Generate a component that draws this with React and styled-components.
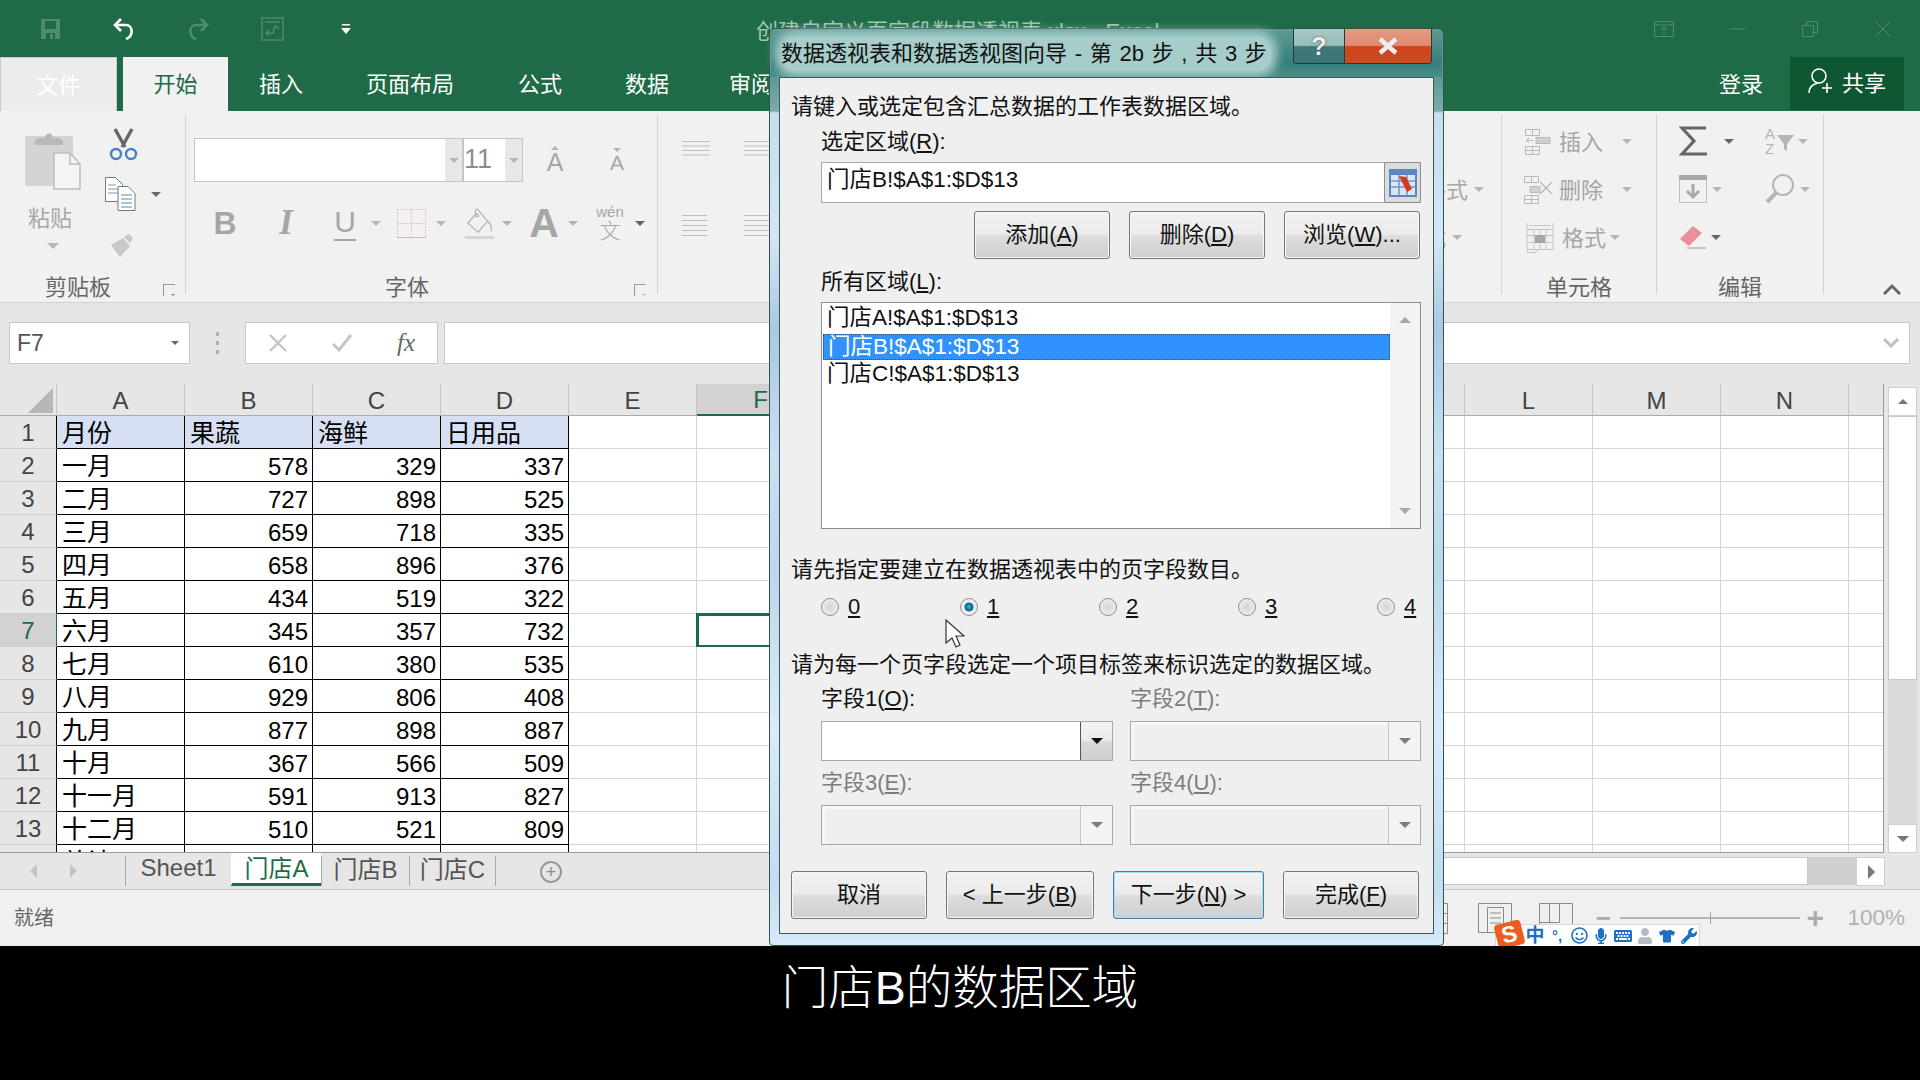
import React from 'react';
import styled, { createGlobalStyle } from 'styled-components';
import { FaRegSmile, FaMicrophone, FaKeyboard, FaUser, FaTshirt, FaWrench } from 'react-icons/fa';

const GREEN = '#1f6b48';
const DIM = '#4f8b6d';
const GREY_TEXT = '#a6a6a6';
const FONT = '"Liberation Sans", "Noto Sans CJK SC", sans-serif';

const GlobalStyle = createGlobalStyle`
  html, body { margin: 0; padding: 0; background: #000; }
  * { box-sizing: border-box; }
  #root { width: 1920px; height: 1080px; overflow: hidden; font-family: ${FONT}; }
`;

const Screen = styled.div`
  width: 1920px;
  height: 1080px;
  display: flex;
  flex-direction: column;
  background: #000;
`;

const Excel = styled.div`
  position: relative;
  height: 946px;
  display: flex;
  flex-direction: column;
  overflow: hidden;
  background: #e6e6e6;
`;

const Subtitle = styled.div`
  height: 134px;
  display: flex;
  justify-content: center;
  color: #fff;
  font-size: 46.5px;
  line-height: 84px;
  font-weight: 300;
`;

/* title bar */
const TitleBar = styled.div`
  height: 57px;
  display: flex;
  align-items: center;
  padding-left: 13px;
  background: ${GREEN};
`;

const QatButton = styled.div`
  width: 74px;
  display: flex;
  justify-content: center;
  align-items: center;
`;

const DocTitle = styled.div`
  margin-left: 373px;
  font-size: 22px;
  color: #9fc4b1;
  white-space: nowrap;
`;

const WindowButtons = styled.div`
  margin-left: auto;
  margin-right: 1px;
  display: flex;
`;

const WindowButton = styled.div`
  width: 73px;
  height: 30px;
  display: flex;
  align-items: center;
  justify-content: center;
`;

/* tabs */
const TabRow = styled.div`
  height: 54px;
  display: flex;
  background: ${GREEN};
  font-size: 22px;
`;

const FileTab = styled.div`
  width: 117px;
  margin-right: 6px;
  padding-bottom: 4px;
  display: flex;
  align-items: center;
  justify-content: center;
  background: #ececec;
  border: 1px solid #c9c9c9;
  border-bottom: 0;
  color: #fff;
`;

const RibbonTab = styled.div`
  width: ${p => p.$w}px;
  padding-bottom: 4px;
  display: flex;
  align-items: center;
  justify-content: center;
  background: ${p => (p.$active ? '#f1f1f1' : 'transparent')};
  color: ${p => (p.$active ? GREEN : '#fff')};
`;

const Account = styled.div`
  margin-left: auto;
  margin-right: 16px;
  display: flex;
  align-items: stretch;
`;

const SignIn = styled.div`
  width: 98px;
  padding-bottom: 4px;
  display: flex;
  align-items: center;
  justify-content: center;
  color: #fff;
`;

const ShareButton = styled.div`
  width: 114px;
  height: 53px;
  display: flex;
  align-items: center;
  gap: 9px;
  padding: 0 0 5px 18px;
  background: #0f5732;
  color: #fff;
`;

/* ribbon */
const Ribbon = styled.div`
  height: 192px;
  display: flex;
  background: #f1f1f1;
  border-bottom: 1px solid #d2d2d2;
`;

const Group = styled.div`
  width: ${p => p.$w}px;
  display: flex;
  flex-direction: column;
`;

const GroupBody = styled.div`
  height: 162px;
  display: flex;
  flex-direction: ${p => (p.$row ? 'row' : 'column')};
  padding: ${p => p.$pad || '0'};
`;

const GroupLabel = styled.div`
  height: 29px;
  display: grid;
  grid-template-columns: ${p => (p.$shift ? `${p.$shift}px auto 1fr` : '1fr auto 1fr')};
  align-items: center;
  font-size: 22px;
  line-height: 21px;
  color: #666;
`;

const Launcher = styled.div`
  grid-column: 3;
  justify-self: end;
  margin-right: ${p => p.$mr || 10}px;
  margin-top: 4px;
  width: 12px;
  height: 12px;
  border-left: 1px solid #999;
  border-top: 1px solid #999;
  display: flex;
  align-items: flex-end;
  justify-content: flex-end;
`;

const Divider = styled.div`
  width: 1px;
  margin: 4px 0 8px;
  background: #d4d4d4;
`;

const Caret = styled.span`
  display: inline-block;
  flex: none;
  width: 0;
  height: 0;
  margin-left: ${p => p.$ml || 0}px;
  border-left: ${p => p.$s || 6}px solid transparent;
  border-right: ${p => p.$s || 6}px solid transparent;
  border-top: ${p => (p.$up ? 0 : `${p.$s || 6}px solid ${p.$c || '#b5b5b5'}`)};
  border-bottom: ${p => (p.$up ? `${p.$s || 6}px solid ${p.$c || '#b5b5b5'}` : 0)};
`;

const PasteColumn = styled.div`
  width: 100px;
  padding-top: 19px;
  padding-left: 6px;
  display: flex;
  flex-direction: column;
  align-items: center;
  color: ${GREY_TEXT};
  font-size: 22px;
`;

const PasteText = styled.div`
  line-height: 30px;
  margin: 14px 0 9px -6px;
`;

const ClipTools = styled.div`
  width: 85px;
  padding-top: 17px;
  display: flex;
  flex-direction: column;
  align-items: flex-start;
`;

const ClipTool = styled.div`
  display: flex;
  align-items: center;
  margin-top: ${p => p.$mt || 0}px;
  margin-left: ${p => p.$ml || 0}px;
`;

const FontRow = styled.div`
  display: flex;
  align-items: center;
  height: ${p => p.$h}px;
  margin-top: ${p => p.$mt || 0}px;
  margin-left: 8px;
`;

const ComboField = styled.div`
  width: ${p => p.$w}px;
  height: 44px;
  display: flex;
  justify-content: space-between;
  margin-right: ${p => p.$mr || 0}px;
  background: #fff;
  border: 1px solid #c6c6c6;
  padding-left: 0;
  font-size: 27px;
  line-height: 40px;
  color: #8c8c8c;
  font-weight: 300;
`;

const ComboDrop = styled.div`
  width: 17px;
  display: flex;
  align-items: center;
  justify-content: center;
  background: #e8e8e8;
`;

const FontSizer = styled.div`
  width: ${p => p.$w}px;
  height: 44px;
  display: flex;
  flex-direction: column;
  align-items: center;
  justify-content: center;
  color: ${GREY_TEXT};
  font-size: ${p => p.$size}px;
  line-height: ${p => p.$size}px;
`;

const Slot = styled.div`
  width: ${p => p.$w}px;
  margin-left: ${p => p.$ml || 0}px;
  display: flex;
  align-items: center;
  justify-content: center;
  color: ${GREY_TEXT};
`;

const BoldMark = styled.span`
  font-size: 32px;
  font-weight: 700;
`;

const ItalicMark = styled.span`
  font-family: "Liberation Serif", serif;
  font-size: 35px;
  font-weight: 700;
  font-style: italic;
`;

const UnderMark = styled.span`
  font-size: 30px;
  line-height: 34px;
  border-bottom: 2px solid ${GREY_TEXT};
`;

const BigA = styled.span`
  font-size: 41px;
  line-height: 40px;
  font-weight: 700;
`;

const PhoneticMark = styled.div`
  display: flex;
  flex-direction: column;
  align-items: center;
  font-size: 15px;
  line-height: 16px;
`;

const PhoneticChar = styled.span`
  font-size: 21px;
  line-height: 22px;
  font-weight: 300;
`;

const AlignGrid = styled.div`
  display: grid;
  grid-template-columns: 62px 62px;
  grid-template-rows: 74px auto;
  padding: 30px 0 0 24px;
`;

const StyleRows = styled.div`
  padding: 6px 0 0 336px;
`;

const ToolRow = styled.div`
  height: 48px;
  display: flex;
  align-items: center;
  font-size: 22px;
  color: ${GREY_TEXT};
  padding-left: ${p => p.$pl || 0}px;
`;

const ToolText = styled.span`
  margin-top: -3px;
`;

const RowIcon = styled.div`
  width: ${p => p.$w}px;
  display: flex;
  align-items: center;
`;

const EditGrid = styled.div`
  display: grid;
  grid-template-columns: 86px 60px;
  grid-auto-rows: 48px;
  padding: 6px 0 0 22px;
`;

const EditCell = styled.div`
  display: flex;
  align-items: center;
`;

const RibbonEnd = styled.div`
  flex: 1;
  display: flex;
  align-items: flex-end;
  justify-content: flex-end;
  padding: 0 19px 7px 0;
`;

/* formula bar */
const FormulaBar = styled.div`
  height: 81px;
  display: flex;
  align-items: flex-start;
  padding: 19px 10px 0 9px;
  background: #e6e6e6;
`;

const NameBox = styled.div`
  width: 181px;
  height: 42px;
  display: flex;
  align-items: center;
  justify-content: space-between;
  padding: 0 10px 0 7px;
  background: #fff;
  border: 1px solid #c8c8c8;
  font-size: 23px;
  color: #555;
`;

const BarDots = styled.div`
  width: 55px;
  height: 42px;
  display: flex;
  flex-direction: column;
  align-items: center;
  justify-content: center;
  gap: 5px;
`;

const BarDot = styled.span`
  width: 3px;
  height: 4px;
  background: #b0b0b0;
`;

const FuncBox = styled.div`
  width: 193px;
  height: 42px;
  display: flex;
  align-items: center;
  justify-content: space-between;
  padding: 0 22px 0 23px;
  background: #fff;
  border: 1px solid #c8c8c8;
  color: #666;
`;

const FxMark = styled.span`
  font-family: "Liberation Serif", serif;
  font-style: italic;
  font-size: 25px;
`;

const FormulaInput = styled.div`
  flex: 1;
  height: 42px;
  margin-left: 6px;
  display: flex;
  align-items: center;
  justify-content: flex-end;
  padding-right: 10px;
  background: #fff;
  border: 1px solid #c8c8c8;
`;

/* sheet */
const SheetBody = styled.div`
  height: 469px;
  display: flex;
`;

const SheetGrid = styled.div`
  width: 1884px;
  height: 469px;
  overflow: hidden;
  display: grid;
  grid-template-columns: 57px repeat(15, 128px);
  grid-template-rows: 32px repeat(14, 33px);
  border-right: 1px solid #9a9a9a;
  border-bottom: 1px solid #9a9a9a;
  background: #fff;
`;

const Corner = styled.div`
  background: #e6e6e6;
  border-right: 1px solid #c4c4c4;
  border-bottom: 1px solid #ababab;
  display: flex;
  align-items: flex-end;
  justify-content: flex-end;
  padding: 0 3px 2px 0;
`;

const CornerMark = styled.span`
  width: 0;
  height: 0;
  border-left: 25px solid transparent;
  border-bottom: 25px solid #b7b7b7;
`;

const ColHead = styled.div`
  display: flex;
  align-items: center;
  justify-content: center;
  padding-top: 2px;
  font-size: 24px;
  color: ${p => (p.$sel ? GREEN : '#444')};
  background: ${p => (p.$sel ? '#d2d2d2' : '#e6e6e6')};
  border-right: 1px solid #c4c4c4;
  border-bottom: ${p => (p.$sel ? `2px solid ${GREEN}` : '1px solid #ababab')};
`;

const RowHead = styled.div`
  display: flex;
  align-items: center;
  justify-content: center;
  padding-top: 2px;
  font-size: 24px;
  color: ${p => (p.$sel ? GREEN : '#444')};
  background: ${p => (p.$sel ? '#d2d2d2' : '#e6e6e6')};
  border-right: 1px solid ${p => (p.$sel ? GREEN : '#000')};
  border-bottom: 1px solid #cfcfcf;
`;

const Cell = styled.div`
  display: flex;
  align-items: center;
  justify-content: ${p => (p.$num ? 'flex-end' : 'flex-start')};
  padding: 2px 4px 0 5px;
  font-size: ${p => (p.$num ? 24 : 25)}px;
  line-height: 31px;
  color: #000;
  background: ${p => (p.$head ? '#d6e0f2' : '#fff')};
  border-right: 1px solid ${p => (p.$boxed ? '#000' : '#d6d6d6')};
  border-bottom: 1px solid ${p => (p.$boxed ? '#000' : '#d6d6d6')};
  outline: ${p => (p.$sel ? `3px solid #1d6a47` : 'none')};
  outline-offset: -2px;
`;

const VScroll = styled.div`
  width: 36px;
  display: flex;
  flex-direction: column;
  padding: 3px 3px 0 4px;
`;

const ScrollButton = styled.div`
  width: ${p => p.$w || 29}px;
  height: ${p => p.$h || 29}px;
  flex: none;
  display: flex;
  align-items: center;
  justify-content: center;
  background: #fff;
  border: 1px solid #d0d0d0;
`;

const VTrack = styled.div`
  flex: 1;
  background: #dadada;
`;

const VThumb = styled.div`
  height: 264px;
  background: #fff;
  border: 1px solid #c8c8c8;
`;

/* sheet tabs */
const TabBar = styled.div`
  height: 36px;
  display: flex;
  background: #e6e6e6;
  padding-right: 35px;
`;

const TabNav = styled.div`
  width: 125px;
  display: flex;
  align-items: center;
  gap: 31px;
  padding-left: 30px;
`;

const SheetTab = styled.div`
  width: ${p => p.$w}px;
  height: ${p => (p.$active ? 33 : 30)}px;
  margin-top: ${p => (p.$active ? 0 : 3)}px;
  padding-bottom: ${p => (p.$active ? 4 : 7)}px;
  display: flex;
  align-items: center;
  justify-content: center;
  font-size: 24px;
  color: ${p => (p.$active ? GREEN : '#555')};
  background: ${p => (p.$active ? '#fff' : 'transparent')};
  border-left: 1px solid ${p => (p.$active ? 'transparent' : '#a8a8a8')};
  border-right: ${p => (p.$last ? '1px solid #a8a8a8' : 0)};
  border-bottom: ${p => (p.$active ? `3px solid ${GREEN}` : 0)};
`;

const AddSheet = styled.div`
  width: 22px;
  height: 22px;
  margin: 8px 0 0 44px;
  border: 2px solid #9a9a9a;
  border-radius: 50%;
  display: flex;
  align-items: center;
  justify-content: center;
  color: #8a8a8a;
  font-size: 18px;
  line-height: 18px;
`;

const HScroll = styled.div`
  margin-left: auto;
  margin-top: 4px;
  width: 1000px;
  height: 28px;
  display: flex;
`;

const HThumb = styled.div`
  flex: 1;
  background: #fff;
  border: 1px solid #c8c8c8;
`;

const HTrack = styled.div`
  width: 48px;
  background: #cfcfcf;
`;

/* status bar */
const StatusBar = styled.div`
  position: relative;
  height: 57px;
  display: flex;
  align-items: center;
  padding: 0 15px 0 14px;
  background: #f0f0f0;
  border-top: 1px solid #c9c9c9;
  font-size: 20px;
  color: #666;
`;

const StatusText = styled.span`
  margin-top: -4px;
`;

const StatusRight = styled.div`
  margin-left: auto;
  display: flex;
  align-items: center;
`;

const ViewIcon = styled.div`
  margin-left: ${p => p.$ml || 0}px;
  display: flex;
`;

const ZoomSlider = styled.div`
  width: 180px;
  height: 2px;
  margin: 0 6px;
  background: #b4b4b4;
  display: flex;
  justify-content: center;
  align-items: center;
`;

const ZoomTick = styled.span`
  width: 1px;
  height: 12px;
  background: #a0a0a0;
`;

const ZoomMark = styled.span`
  font-size: ${p => p.$size}px;
  font-weight: 700;
  line-height: 20px;
  color: #ababab;
  width: ${p => p.$w}px;
  margin-left: ${p => p.$ml || 0}px;
  text-align: center;
`;

const ZoomValue = styled.span`
  margin-left: 25px;
  font-size: 22.5px;
  color: #b2b2b2;
`;

/* sogou floating bar */
const ImeBar = styled.div`
  position: absolute;
  left: 1495px;
  top: 34px;
  width: 205px;
  height: 22px;
  display: flex;
  align-items: center;
  background: #fff;
  border: 1px solid #d6d6d6;
  border-bottom: 0;
  color: #1d70c4;
`;

const ImeLogo = styled.div`
  position: absolute;
  left: 0;
  top: -3px;
  width: 27px;
  height: 25px;
  background: #ec5d22;
  border-radius: 4px;
  transform: rotate(-14deg);
  color: #fff;
  font-size: 23px;
  font-weight: 700;
  line-height: 25px;
  text-align: center;
`;

const ImeItem = styled.div`
  width: 22px;
  display: flex;
  align-items: center;
  justify-content: center;
  font-size: ${p => p.$size || 16}px;
  font-weight: 700;
  line-height: 20px;
  color: ${p => p.$c || '#1d70c4'};
`;

const ImeItems = styled.div`
  display: flex;
  margin-left: 28px;
`;

/* wizard dialog */
const Dialog = styled.div`
  position: absolute;
  left: 769px;
  top: 28px;
  width: 675px;
  height: 918px;
  display: flex;
  flex-direction: column;
  padding: 0 9px 11px;
  border: 1px solid #35524f;
  border-radius: 6px 6px 4px 4px;
  background: linear-gradient(180deg, #5e9793 0, #5f9a96 50px, #79aca9 82px, #c6def1 84px,
    #d2e6f6 210px, #a9c8e2 300px, #c8e0f4 430px, #bcd6ec 540px, #d8ecfa 700px, #c2dcf2 850px, #d8eafa 917px);
`;

const DialogHead = styled.div`
  height: 48px;
  flex: none;
  display: flex;
  align-items: flex-start;
  margin: 0 -8px;
  padding: 0 10px 0 10px;
  background: linear-gradient(180deg, #5f9a96 0, #33807a 70%, #4b8d89 100%);
  border-radius: 6px 6px 0 0;
`;

const DialogTitle = styled.div`
  margin-top: 8px;
  height: 34px;
  padding-right: 4px;
  font-size: 22px;
  line-height: 34px;
  word-spacing: 1.6px;
  color: #111;
  white-space: nowrap;
  background: #a6cdca;
  box-shadow: 0 0 10px 6px #a6cdca;
  border-radius: 14px;
`;

const CaptionButtons = styled.div`
  margin-left: auto;
  display: flex;
  border: 1px solid #1f3b3c;
  border-top: 0;
  border-radius: 0 0 4px 4px;
  overflow: hidden;
`;

const CaptionHelp = styled.div`
  width: 51px;
  height: 34px;
  display: flex;
  align-items: center;
  justify-content: center;
  border-right: 1px solid #1f3b3c;
  background: linear-gradient(180deg, #a8c9c5 0, #9abdb9 48%, #3f7a7b 52%, #3a7475 100%);
  color: #eee;
  font-size: 25px;
  font-weight: 700;
  text-shadow: 0 0 2px #333;
`;

const CaptionClose = styled.div`
  width: 86px;
  height: 34px;
  display: flex;
  align-items: center;
  justify-content: center;
  background: linear-gradient(180deg, #e49a82 0, #e08a70 48%, #d1441c 52%, #cc4a22 100%);
`;

const DialogPanel = styled.div`
  flex: 1;
  display: flex;
  flex-direction: column;
  padding: 14px 12px 0 11px;
  background: #efefef;
  border: 1px solid #3a5a5a;
  font-size: 22px;
  line-height: 30px;
  color: #111;
`;

const Prompt = styled.div`
  height: 30px;
  margin-top: ${p => p.$mt || 0}px;
`;

const FieldLabel = styled.div`
  height: 30px;
  margin-top: ${p => p.$mt || 0}px;
  margin-left: ${p => (p.$flat ? 0 : 30)}px;
  color: ${p => (p.$off ? '#7d7d7d' : '#111')};
`;

const RangeField = styled.div`
  height: 41px;
  margin: 5px 0 0 30px;
  display: flex;
  justify-content: space-between;
  background: #fff;
  border: 1px solid #a8a8a8;
  padding-left: 5px;
  font-size: 22.5px;
  line-height: 34px;
`;

const RefButton = styled.div`
  width: 37px;
  display: flex;
  align-items: center;
  justify-content: center;
  background: #dcdcdc;
  border: 1px solid #8e8e8e;
  border-radius: 2px;
  margin: -1px -1px -1px 0;
`;

const ButtonRow = styled.div`
  display: flex;
  justify-content: ${p => (p.$end ? 'flex-end' : 'flex-start')};
  gap: 19px;
  margin-top: ${p => p.$mt}px;
  padding-right: 1px;
`;

const WizardButton = styled.div`
  width: ${p => p.$w || 136}px;
  height: 48px;
  display: flex;
  align-items: center;
  justify-content: center;
  color: #111;
  background: linear-gradient(180deg, #f2f2f2 0, #ebebeb 48%, #dddddd 52%, #cfcfcf 100%);
  border: 1px solid ${p => (p.$primary ? '#3c7fb1' : '#777')};
  box-shadow: ${p => (p.$primary ? 'inset 0 0 0 1px #a9dcf2' : 'inset 0 0 0 1px #f7f7f7')};
  border-radius: 3px;
`;

const RangeList = styled.div`
  height: 227px;
  margin: 5px 0 0 30px;
  display: flex;
  background: #fff;
  border: 1px solid #8c8c8c;
  padding: 2px 0 0 1px;
  font-size: 22.5px;
`;

const RangeItems = styled.div`
  flex: 1;
`;

const RangeItem = styled.div`
  height: ${p => (p.$sel ? 26 : 28)}px;
  margin: ${p => (p.$sel ? '1px 0' : 0)};
  padding-left: 4px;
  line-height: ${p => (p.$sel ? 24 : 26)}px;
  color: ${p => (p.$sel ? '#fff' : '#111')};
  background: ${p => (p.$sel ? '#3092ff' : 'transparent')};
  border: ${p => (p.$sel ? '1px dotted #3d4a5c' : '0')};
`;

const ListScroll = styled.div`
  width: 30px;
  margin-top: -2px;
  background: #f3f3f3;
  display: flex;
  flex-direction: column;
  align-items: center;
  justify-content: space-between;
  padding: 14px 0 14px;
`;

const RadioRow = styled.div`
  display: grid;
  grid-template-columns: repeat(5, 139px);
  margin: 7px 0 0 30px;
  height: 30px;
`;

const RadioItem = styled.div`
  display: flex;
  align-items: center;
  gap: 9px;
`;

const RadioDot = styled.span`
  width: 18px;
  height: 18px;
  border-radius: 50%;
  border: 1px solid #8c8c8c;
  background: ${p =>
    p.$on
      ? 'radial-gradient(circle, #39b3e6 0, #05597f 36%, #e6e6e6 42%, #fff 100%)'
      : 'radial-gradient(circle, #d4d4d4 0, #e4e4e4 50%, #fff 100%)'};
`;

const FieldGrid = styled.div`
  display: grid;
  grid-template-columns: 292px 291px;
  column-gap: 17px;
  margin: ${p => p.$mt}px 0 0 30px;
`;

const ComboBox = styled.div`
  height: 40px;
  margin-top: 7px;
  display: flex;
  justify-content: flex-end;
  background: ${p => (p.$off ? '#efefef' : '#fff')};
  border: 1px solid #a9a9a9;
  box-shadow: ${p => (p.$off ? 'inset 3px 3px 0 #f7f7f7' : 'none')};
`;

const ComboButton = styled.div`
  width: 32px;
  display: flex;
  align-items: center;
  justify-content: center;
  background: ${p =>
    p.$off ? '#f3f3f3' : 'linear-gradient(180deg, #f2f2f2 0, #ebebeb 48%, #d8d8d8 52%, #cfcfcf 100%)'};
  border-left: 1px solid ${p => (p.$off ? '#c8c8c8' : '#555')};
`;

const MouseCursor = styled.svg`
  position: absolute;
  left: 175px;
  top: 590px;
`;

const RANGES = ['门店A!$A$1:$D$13', '门店B!$A$1:$D$13', '门店C!$A$1:$D$13'];
const COLUMNS = 'ABCDEFGHIJKLMNO'.split('');
const TABLE = [
  ['月份', '果蔬', '海鲜', '日用品'],
  ['一月', 578, 329, 337],
  ['二月', 727, 898, 525],
  ['三月', 659, 718, 335],
  ['四月', 658, 896, 376],
  ['五月', 434, 519, 322],
  ['六月', 345, 357, 732],
  ['七月', 610, 380, 535],
  ['八月', 929, 806, 408],
  ['九月', 877, 898, 887],
  ['十月', 367, 566, 509],
  ['十一月', 591, 913, 827],
  ['十二月', 510, 521, 809],
  ['总计', '', '', '']
];

function QatBar() {
  return (
    <>
      <QatButton>
        <svg width="21" height="22" viewBox="0 0 21 22">
          <path d="M1 1h19v20H1z" fill={DIM} />
          <path d="M5 3h11v8H5zM6 15h9v6H6z" fill={GREEN} />
          <path d="M10 16h3v5h-3z" fill={DIM} />
        </svg>
      </QatButton>
      <QatButton>
        <svg width="24" height="24" viewBox="0 0 24 24" fill="none" stroke="#fff" strokeWidth="2.6">
          <path d="M9 2 3 8l6 6" />
          <path d="M3 8h11c7 0 8 11 0 14" />
        </svg>
      </QatButton>
      <QatButton>
        <svg width="24" height="24" viewBox="0 0 24 24" fill="none" stroke={DIM} strokeWidth="2.6">
          <path d="M15 2l6 6-6 6" />
          <path d="M21 8H10C3 8 2 19 10 22" />
        </svg>
      </QatButton>
      <QatButton>
        <svg width="23" height="24" viewBox="0 0 23 24" fill="none" stroke={DIM} strokeWidth="1.4">
          <path d="M1 1h21v22H1z" />
          <path d="M4 5h15M8 19l-3-3 3-3M5 16h7l2-7M12 12l3-3 3 3" />
        </svg>
      </QatButton>
      <QatButton>
        <svg width="12" height="12" viewBox="0 0 12 12" fill="#fff">
          <path d="M2 1h8v1.6H2zM1 5h10L6 11z" />
        </svg>
      </QatButton>
    </>
  );
}

function WindowIcons() {
  return (
    <WindowButtons>
      <WindowButton>
        <svg width="20" height="16" viewBox="0 0 20 16" fill="none" stroke={DIM}>
          <path d="M.5.5h19v15H.5zM.5 4h19M10 14V6M7 9l3-3 3 3" />
        </svg>
      </WindowButton>
      <WindowButton>
        <svg width="16" height="2" viewBox="0 0 16 2">
          <path d="M0 1h16" stroke={DIM} />
        </svg>
      </WindowButton>
      <WindowButton>
        <svg width="16" height="16" viewBox="0 0 16 16" fill="none" stroke={DIM}>
          <path d="M.5 4.500h11v11H.5zM4.500 4V.5h11v11H12" />
        </svg>
      </WindowButton>
      <WindowButton>
        <svg width="16" height="16" viewBox="0 0 16 16" fill="none" stroke={DIM}>
          <path d="M.5.5l15 15M15.500.5l-15 15" />
        </svg>
      </WindowButton>
    </WindowButtons>
  );
}

function ClipboardGroup() {
  return (
    <Group $w={185}>
      <GroupBody $row>
        <PasteColumn>
          <svg width="56" height="60" viewBox="0 0 56 60">
            <rect x="0" y="6" width="48" height="50" rx="3" fill="#d4d4d4" />
            <path d="M10 12c0-3 3-4 6-4h4c0-6 8-6 8 0h4c3 0 6 1 6 4v3H10z" fill="#b9b9b9" />
            <path d="M29 23h16l10 11v25H29z" fill="#f5f3f5" stroke="#bdbdbd" strokeWidth="1.5" />
            <path d="M45 23v11h10" fill="none" stroke="#bdbdbd" strokeWidth="1.5" />
          </svg>
          <PasteText>粘贴</PasteText>
          <Caret $c="#b8b8b8" />
        </PasteColumn>
        <ClipTools>
          <ClipTool $ml={9}>
            <svg width="29" height="33" viewBox="0 0 29 33" fill="none">
              <path d="M6 1l10 18M23 1L13 19" stroke="#666" strokeWidth="3.4" />
              <circle cx="7" cy="26" r="5" stroke="#4f81bd" strokeWidth="2.4" />
              <circle cx="22" cy="26" r="5" stroke="#4f81bd" strokeWidth="2.4" />
            </svg>
          </ClipTool>
          <ClipTool $mt={16} $ml={5}>
            <svg width="31" height="34" viewBox="0 0 31 34" fill="none" stroke="#777">
              <path d="M.5.5h10l7 7v17H.5z" fill="#fff" />
              <path d="M3 8h8M3 12h11M3 16h11" stroke="#6d9fb5" />
              <path d="M13 9.500h10l7 7v17H13z" fill="#fff" />
              <path d="M16 18h11M16 22h11M16 26h11M16 30h11" stroke="#4f8ca8" />
            </svg>
            <Caret $ml={15} $c="#6a6a6a" $s={5} />
          </ClipTool>
          <ClipTool $mt={22} $ml={10}>
            <svg width="26" height="24" viewBox="0 0 26 24" fill="#c8c8c8">
              <path d="M1 12 13 5l7 8-10 11zM14 4l5-3 4 4-3 5z" />
            </svg>
          </ClipTool>
        </ClipTools>
      </GroupBody>
      <GroupLabel $shift={45}>
        <span />
        <span>剪贴板</span>
        <Launcher>
          <Caret $s={2} $c="#888" />
        </Launcher>
      </GroupLabel>
    </Group>
  );
}

function FontGroup() {
  return (
    <Group $w={471}>
      <GroupBody $pad="27px 0 0">
        <FontRow $h={44}>
          <ComboField $w={269}>
            <span />
            <ComboDrop>
              <Caret $s={5} />
            </ComboDrop>
          </ComboField>
          <ComboField $w={60} $mr={10}>
            <span>11</span>
            <ComboDrop>
              <Caret $s={5} />
            </ComboDrop>
          </ComboField>
          <FontSizer $w={44} $size={25}>
            <Caret $up $s={4} />
            A
          </FontSizer>
          <FontSizer $w={80} $size={21}>
            <Caret $s={4} />
            A
          </FontSizer>
        </FontRow>
        <FontRow $h={40} $mt={21}>
          <Slot $w={62}><BoldMark>B</BoldMark></Slot>
          <Slot $w={60}><ItalicMark>I</ItalicMark></Slot>
          <Slot $w={46} $ml={6}><UnderMark>U</UnderMark></Slot>
          <Slot $w={16}><Caret $s={5} /></Slot>
          <Slot $w={29} $ml={13}>
            <svg width="29" height="29" viewBox="0 0 29 29" fill="#f5eff4" stroke="#c9bcc6" strokeDasharray="1.5 1.5">
              <path d="M.5.5h28v28H.5zM14.500.5v28M.5 14.500h28" />
              <path d="M0 28.500h29" stroke="#bdbdbd" strokeDasharray="none" />
            </svg>
          </Slot>
          <Slot $w={16} $ml={7}><Caret $s={5} /></Slot>
          <Slot $w={30} $ml={16}>
            <svg width="32" height="34" viewBox="0 0 32 34" fill="none" stroke="#b5b5b5" strokeWidth="1.4">
              <path d="M13 2c-2 0-3 4-1 5l-9 10 11 10 10-12z" />
              <circle cx="13" cy="9" r="1.5" />
              <path d="M24 15c4 3 5 6 4 11" />
              <path d="M0 31h31v3H0z" fill="#d4d4d4" stroke="none" />
            </svg>
          </Slot>
          <Slot $w={16} $ml={4}><Caret $s={5} /></Slot>
          <Slot $w={30} $ml={14}><BigA>A</BigA></Slot>
          <Slot $w={16} $ml={6}><Caret $s={5} /></Slot>
          <Slot $w={30} $ml={14}>
            <PhoneticMark>
              wén
              <PhoneticChar>文</PhoneticChar>
            </PhoneticMark>
          </Slot>
          <Slot $w={16} $ml={7}><Caret $s={5} $c="#666" /></Slot>
        </FontRow>
      </GroupBody>
      <GroupLabel $shift={199}>
        <span />
        <span>字体</span>
        <Launcher $mr={11}>
          <Caret $s={2} $c="#bbb" />
        </Launcher>
      </GroupLabel>
    </Group>
  );
}

const AlignLines = ({ w, lines = 3, gap = 5 }) => (
  <svg width={w} height={lines * gap + 1} viewBox={`0 0 ${w} ${lines * gap + 1}`}>
    {Array.from({ length: lines }).map((_, i) => (
      <path key={i} d={`M0 ${i * gap + 0.5}h${w}`} stroke="#bdbdbd" />
    ))}
  </svg>
);

function AlignGroup() {
  return (
    <Group $w={342}>
      <GroupBody>
        <AlignGrid>
          <AlignLines w={28} lines={4} gap={4.5} />
          <AlignLines w={28} lines={4} gap={4.5} />
          <AlignLines w={25} lines={5} gap={5} />
          <AlignLines w={28} lines={5} gap={5} />
        </AlignGrid>
      </GroupBody>
    </Group>
  );
}

function StylesGroup() {
  return (
    <Group $w={501}>
      <GroupBody>
        <StyleRows>
          <ToolRow><ToolText>条件格式</ToolText><Caret $ml={6} $s={5} /></ToolRow>
          <ToolRow><ToolText>套用表格格式</ToolText><Caret $ml={6} $s={5} /></ToolRow>
          <ToolRow><ToolText>单元格样式</ToolText><Caret $ml={6} $s={5} /></ToolRow>
        </StyleRows>
      </GroupBody>
    </Group>
  );
}

function CellsGroup() {
  return (
    <Group $w={154}>
      <GroupBody $pad="6px 0 0">
        <ToolRow $pl={22}>
          <RowIcon $w={35}>
            <svg width="27" height="27" viewBox="0 0 27 27" fill="none" stroke="#b9b9b9">
              <path d="M1.500 1.500h14v6h-14zM8.500 1.500v6M1.500 18.500h14v8h-14zM8.500 18.500v8M1.500 22.500h14" />
              <path d="M12 9.500h14v6H12z" fill="#cfcfcf" />
              <path d="M9 12.500H2M5 10l-3 2.500L5 15" />
            </svg>
          </RowIcon>
          <ToolText>插入</ToolText><Caret $ml={19} $s={5} />
        </ToolRow>
        <ToolRow $pl={21}>
          <RowIcon $w={36}>
            <svg width="30" height="29" viewBox="0 0 30 29" fill="none" stroke="#b9b9b9">
              <path d="M1.500 1.500h14v6h-14zM8.500 1.500v6M1.500 20.500h14v8h-14zM8.500 20.500v8M1.500 24.500h14" />
              <path d="M7 11.500h10v6H7z" fill="#cfcfcf" />
              <path d="M17 7l12 12M29 7 17 19" strokeWidth="1.4" />
            </svg>
          </RowIcon>
          <ToolText>删除</ToolText><Caret $ml={19} $s={5} />
        </ToolRow>
        <ToolRow $pl={24}>
          <RowIcon $w={36}>
            <svg width="28" height="31" viewBox="0 0 28 31" fill="none" stroke="#c4c4c4">
              <path d="M1 1v5M27 1v5M3 3.500h22" />
              <path d="M1 7.500h26v20H1zM1 13.500h26M1 20.500h26M8 7.500v20M20 7.500v20M14 7.500v20" />
              <path d="M9 13h10v8H9z" fill="#a6a6a6" stroke="none" />
              <path d="M1.500 27.500v3h8l2-3h6" />
            </svg>
          </RowIcon>
          <ToolText>格式</ToolText><Caret $ml={4} $s={5} />
        </ToolRow>
      </GroupBody>
      <GroupLabel>
        <span />
        <span>单元格</span>
      </GroupLabel>
    </Group>
  );
}

function EditGroup() {
  return (
    <Group $w={166}>
      <GroupBody>
        <EditGrid>
          <EditCell>
            <svg width="28" height="30" viewBox="0 0 28 30" fill="none" stroke="#666" strokeWidth="3.2">
              <path d="M27 2H3l12 13L3 28h25" />
            </svg>
            <Caret $ml={17} $c="#666" $s={5} />
          </EditCell>
          <EditCell>
            <svg width="30" height="28" viewBox="0 0 30 28">
              <text x="0" y="12" fontSize="15" fill="#b5b5b5" fontFamily="Liberation Sans">A</text>
              <text x="0" y="27" fontSize="15" fill="#b5b5b5" fontFamily="Liberation Sans">Z</text>
              <path d="M12 8h17l-7 9v7l-3-2v-5z" fill="#b5b5b5" />
            </svg>
            <Caret $ml={3} $s={5} />
          </EditCell>
          <EditCell>
            <svg width="28" height="28" viewBox="0 0 28 28" fill="none" stroke="#bdbdbd">
              <path d="M.5.5h27v27H.5z" />
              <path d="M0 0h28v5H0z" fill="#a8a8a8" stroke="none" />
              <path d="M14 9v13M8 16l6 6 6-6" stroke="#a8a8a8" strokeWidth="3" />
            </svg>
            <Caret $ml={5} $s={5} />
          </EditCell>
          <EditCell>
            <svg width="30" height="30" viewBox="0 0 30 30" fill="none" stroke="#b5b5b5">
              <circle cx="18" cy="11" r="10" strokeWidth="2" />
              <path d="M11 19 2 28" strokeWidth="4" />
            </svg>
            <Caret $ml={5} $s={5} />
          </EditCell>
          <EditCell>
            <svg width="28" height="24" viewBox="0 0 28 24">
              <path d="M1 14 14 1l9 7-13 13z" fill="#ea8e98" />
              <path d="M8 23h19" stroke="#999" />
            </svg>
            <Caret $ml={4} $c="#666" $s={5} />
          </EditCell>
        </EditGrid>
      </GroupBody>
      <GroupLabel>
        <span />
        <span>编辑</span>
      </GroupLabel>
    </Group>
  );
}

function ExcelRibbon() {
  return (
    <Ribbon>
      <ClipboardGroup />
      <Divider />
      <FontGroup />
      <Divider />
      <AlignGroup />
      <StylesGroup />
      <Divider />
      <CellsGroup />
      <Divider />
      <EditGroup />
      <Divider />
      <RibbonEnd>
        <svg width="18" height="12" viewBox="0 0 18 12" fill="none" stroke="#666" strokeWidth="3">
          <path d="M1 11l8-8 8 8" />
        </svg>
      </RibbonEnd>
    </Ribbon>
  );
}

function FormulaRow() {
  return (
    <FormulaBar>
      <NameBox>
        F7
        <Caret $s={4} $c="#666" />
      </NameBox>
      <BarDots>
        <BarDot />
        <BarDot />
        <BarDot />
      </BarDots>
      <FuncBox>
        <svg width="18" height="18" viewBox="0 0 18 18" fill="none" stroke="#c4c4c4" strokeWidth="2.4">
          <path d="M1 1l16 16M17 1 1 17" />
        </svg>
        <svg width="20" height="18" viewBox="0 0 20 18" fill="none" stroke="#c4c4c4" strokeWidth="3">
          <path d="M1 10l6 6L19 1" />
        </svg>
        <FxMark>fx</FxMark>
      </FuncBox>
      <FormulaInput>
        <svg width="16" height="10" viewBox="0 0 16 10" fill="none" stroke="#bdbdbd" strokeWidth="3">
          <path d="M1 1l7 7 7-7" />
        </svg>
      </FormulaInput>
    </FormulaBar>
  );
}

function Sheet() {
  return (
    <SheetBody>
      <SheetGrid>
        <Corner>
          <CornerMark />
        </Corner>
        {COLUMNS.map(c => (
          <ColHead key={c} $sel={c === 'F'}>{c}</ColHead>
        ))}
        {TABLE.map((row, r) => (
          <React.Fragment key={r}>
            <RowHead $sel={r === 6}>{r + 1}</RowHead>
            {COLUMNS.map((c, i) => (
              <Cell
                key={c}
                $boxed={i < 4}
                $head={r === 0 && i < 4}
                $num={typeof row[i] === 'number'}
                $sel={r === 6 && c === 'F'}
              >
                {row[i]}
              </Cell>
            ))}
          </React.Fragment>
        ))}
      </SheetGrid>
      <VScroll>
        <ScrollButton>
          <Caret $up $s={5} $c="#777" />
        </ScrollButton>
        <VTrack>
          <VThumb />
        </VTrack>
        <ScrollButton>
          <Caret $s={6} $c="#777" />
        </ScrollButton>
      </VScroll>
    </SheetBody>
  );
}

function SheetTabs() {
  return (
    <TabBar>
      <TabNav>
        <svg width="8" height="14" viewBox="0 0 8 14"><path d="M7 0v14L0 7z" fill="#c4c4c4" /></svg>
        <svg width="8" height="14" viewBox="0 0 8 14"><path d="M1 0v14l7-7z" fill="#c4c4c4" /></svg>
      </TabNav>
      <SheetTab $w={106}>Sheet1</SheetTab>
      <SheetTab $w={90} $active>门店A</SheetTab>
      <SheetTab $w={88}>门店B</SheetTab>
      <SheetTab $w={87} $last>门店C</SheetTab>
      <AddSheet>+</AddSheet>
      <HScroll>
        <HThumb />
        <HTrack />
        <ScrollButton>
          <svg width="8" height="14" viewBox="0 0 8 14"><path d="M1 0v14l7-7z" fill="#777" /></svg>
        </ScrollButton>
      </HScroll>
    </TabBar>
  );
}

function ExcelStatus() {
  return (
    <StatusBar>
      <StatusText>就绪</StatusText>
      <StatusRight>
        <ViewIcon>
          <svg width="35" height="31" viewBox="0 0 35 31" fill="none" stroke="#8a8a8a">
            <path d="M.5.5h34v30H.5zM.5 10.500h34M.5 20.500h34M12 .5v30M23.500.5v30" />
          </svg>
        </ViewIcon>
        <ViewIcon $ml={30}>
          <svg width="34" height="30" viewBox="0 0 34 30" fill="none" stroke="#8a8a8a">
            <path d="M.5.5h33v29H.5zM9.500 4.500h16v25h-16zM12 10h11M12 15h11M12 20h11" />
          </svg>
        </ViewIcon>
        <ViewIcon $ml={27}>
          <svg width="34" height="30" viewBox="0 0 34 30" fill="none" stroke="#8a8a8a">
            <path d="M.5.5h33v29H.5zM10.500.5v19M20.500.5v19M.5 19.500h20" />
          </svg>
        </ViewIcon>
        <ZoomMark $size={26} $w={22} $ml={19}>−</ZoomMark>
        <ZoomSlider>
          <ZoomTick />
        </ZoomSlider>
        <ZoomMark $size={30} $w={16}>+</ZoomMark>
        <ZoomValue>100%</ZoomValue>
      </StatusRight>
      <ImeBar>
        <ImeLogo>S</ImeLogo>
        <ImeItems>
          <ImeItem $size={19}>中</ImeItem>
          <ImeItem $size={15}>°,</ImeItem>
          <ImeItem $size={17}><FaRegSmile /></ImeItem>
          <ImeItem><FaMicrophone /></ImeItem>
          <ImeItem $size={18}><FaKeyboard /></ImeItem>
          <ImeItem $c="#b4bcc4"><FaUser /></ImeItem>
          <ImeItem><FaTshirt /></ImeItem>
          <ImeItem><FaWrench /></ImeItem>
        </ImeItems>
      </ImeBar>
    </StatusBar>
  );
}

function FieldCombo({ off, accel, digit }) {
  return (
    <div>
      <FieldLabel $flat $off={off}>字段{digit}(<u>{accel}</u>):</FieldLabel>
      <ComboBox $off={off}>
        <ComboButton $off={off}>
          <Caret $s={6} $c={off ? '#7d7d7d' : '#111'} />
        </ComboButton>
      </ComboBox>
    </div>
  );
}

function WizardDialog() {
  return (
    <Dialog>
      <DialogHead>
        <DialogTitle>数据透视表和数据透视图向导 - 第 2b 步 , 共 3 步</DialogTitle>
        <CaptionButtons>
          <CaptionHelp>?</CaptionHelp>
          <CaptionClose>
            <svg width="20" height="18" viewBox="0 0 20 18" stroke="#eee" strokeWidth="4.5" fill="none">
              <path d="M2 2l16 14M18 2 2 16" />
            </svg>
          </CaptionClose>
        </CaptionButtons>
      </DialogHead>
      <DialogPanel>
        <Prompt>请键入或选定包含汇总数据的工作表数据区域。</Prompt>
        <FieldLabel $mt={5}>选定区域(<u>R</u>):</FieldLabel>
        <RangeField>
          门店B!$A$1:$D$13
          <RefButton>
            <svg width="28" height="32" viewBox="0 0 28 32">
              <path d="M0 2h28v28H0z" fill="#5b87c0" />
              <path d="M2 8h24v20H2z" fill="#dbe7f5" />
              <path d="M2 14h24M2 20h24M10 8v20M18 8v20" stroke="#6e97c9" strokeWidth="1.5" />
              <path d="M10 9l7 1 6 12-5 3z" fill="#d8391c" />
            </svg>
          </RefButton>
        </RangeField>
        <ButtonRow $end $mt={8}>
          <WizardButton>添加(<u>A</u>)</WizardButton>
          <WizardButton>删除(<u>D</u>)</WizardButton>
          <WizardButton>浏览(<u>W</u>)...</WizardButton>
        </ButtonRow>
        <FieldLabel $mt={8}>所有区域(<u>L</u>):</FieldLabel>
        <RangeList>
          <RangeItems>
            {RANGES.map((r, i) => (
              <RangeItem key={r} $sel={i === 1}>{r}</RangeItem>
            ))}
          </RangeItems>
          <ListScroll>
            <Caret $up $s={6} $c="#a8a8a8" />
            <Caret $s={6} $c="#a8a8a8" />
          </ListScroll>
        </RangeList>
        <Prompt $mt={26}>请先指定要建立在数据透视表中的页字段数目。</Prompt>
        <RadioRow>
          {[0, 1, 2, 3, 4].map(n => (
            <RadioItem key={n}>
              <RadioDot $on={n === 1} />
              <u>{n}</u>
            </RadioItem>
          ))}
        </RadioRow>
        <Prompt $mt={28}>请为每一个页字段选定一个项目标签来标识选定的数据区域。</Prompt>
        <FieldGrid $mt={4}>
          <FieldCombo digit={1} accel="O" />
          <FieldCombo digit={2} accel="T" off />
        </FieldGrid>
        <FieldGrid $mt={7}>
          <FieldCombo digit={3} accel="E" off />
          <FieldCombo digit={4} accel="U" off />
        </FieldGrid>
        <ButtonRow $mt={26}>
          <WizardButton>取消</WizardButton>
          <WizardButton $w={148}>&lt; 上一步(<u>B</u>)</WizardButton>
          <WizardButton $w={151} $primary>下一步(<u>N</u>) &gt;</WizardButton>
          <WizardButton>完成(<u>F</u>)</WizardButton>
        </ButtonRow>
      </DialogPanel>
      <MouseCursor width="20" height="30" viewBox="0 0 20 30">
        <path d="M1 1v23l6-5 4 9 4-2-4-9h8z" fill="#fff" stroke="#333" strokeWidth="1.2" />
      </MouseCursor>
    </Dialog>
  );
}

export default function App() {
  return (
    <>
      <GlobalStyle />
      <Screen>
        <Excel>
          <TitleBar>
            <QatBar />
            <DocTitle>创建自定义页字段数据透视表.xlsx - Excel</DocTitle>
            <WindowIcons />
          </TitleBar>
          <TabRow>
            <FileTab>文件</FileTab>
            <RibbonTab $w={105} $active>开始</RibbonTab>
            <RibbonTab $w={106}>插入</RibbonTab>
            <RibbonTab $w={152}>页面布局</RibbonTab>
            <RibbonTab $w={108}>公式</RibbonTab>
            <RibbonTab $w={106}>数据</RibbonTab>
            <RibbonTab $w={102}>审阅</RibbonTab>
            <Account>
              <SignIn>登录</SignIn>
              <ShareButton>
                <svg width="25" height="26" viewBox="0 0 25 26" fill="none" stroke="#fff" strokeWidth="1.6">
                  <circle cx="11" cy="8" r="7" />
                  <path d="M1 25c0-6 4-9 9-10M19 15v10M14 20h10" />
                </svg>
                共享
              </ShareButton>
            </Account>
          </TabRow>
          <ExcelRibbon />
          <FormulaRow />
          <Sheet />
          <SheetTabs />
          <ExcelStatus />
          <WizardDialog />
        </Excel>
        <Subtitle>门店B的数据区域</Subtitle>
      </Screen>
    </>
  );
}
